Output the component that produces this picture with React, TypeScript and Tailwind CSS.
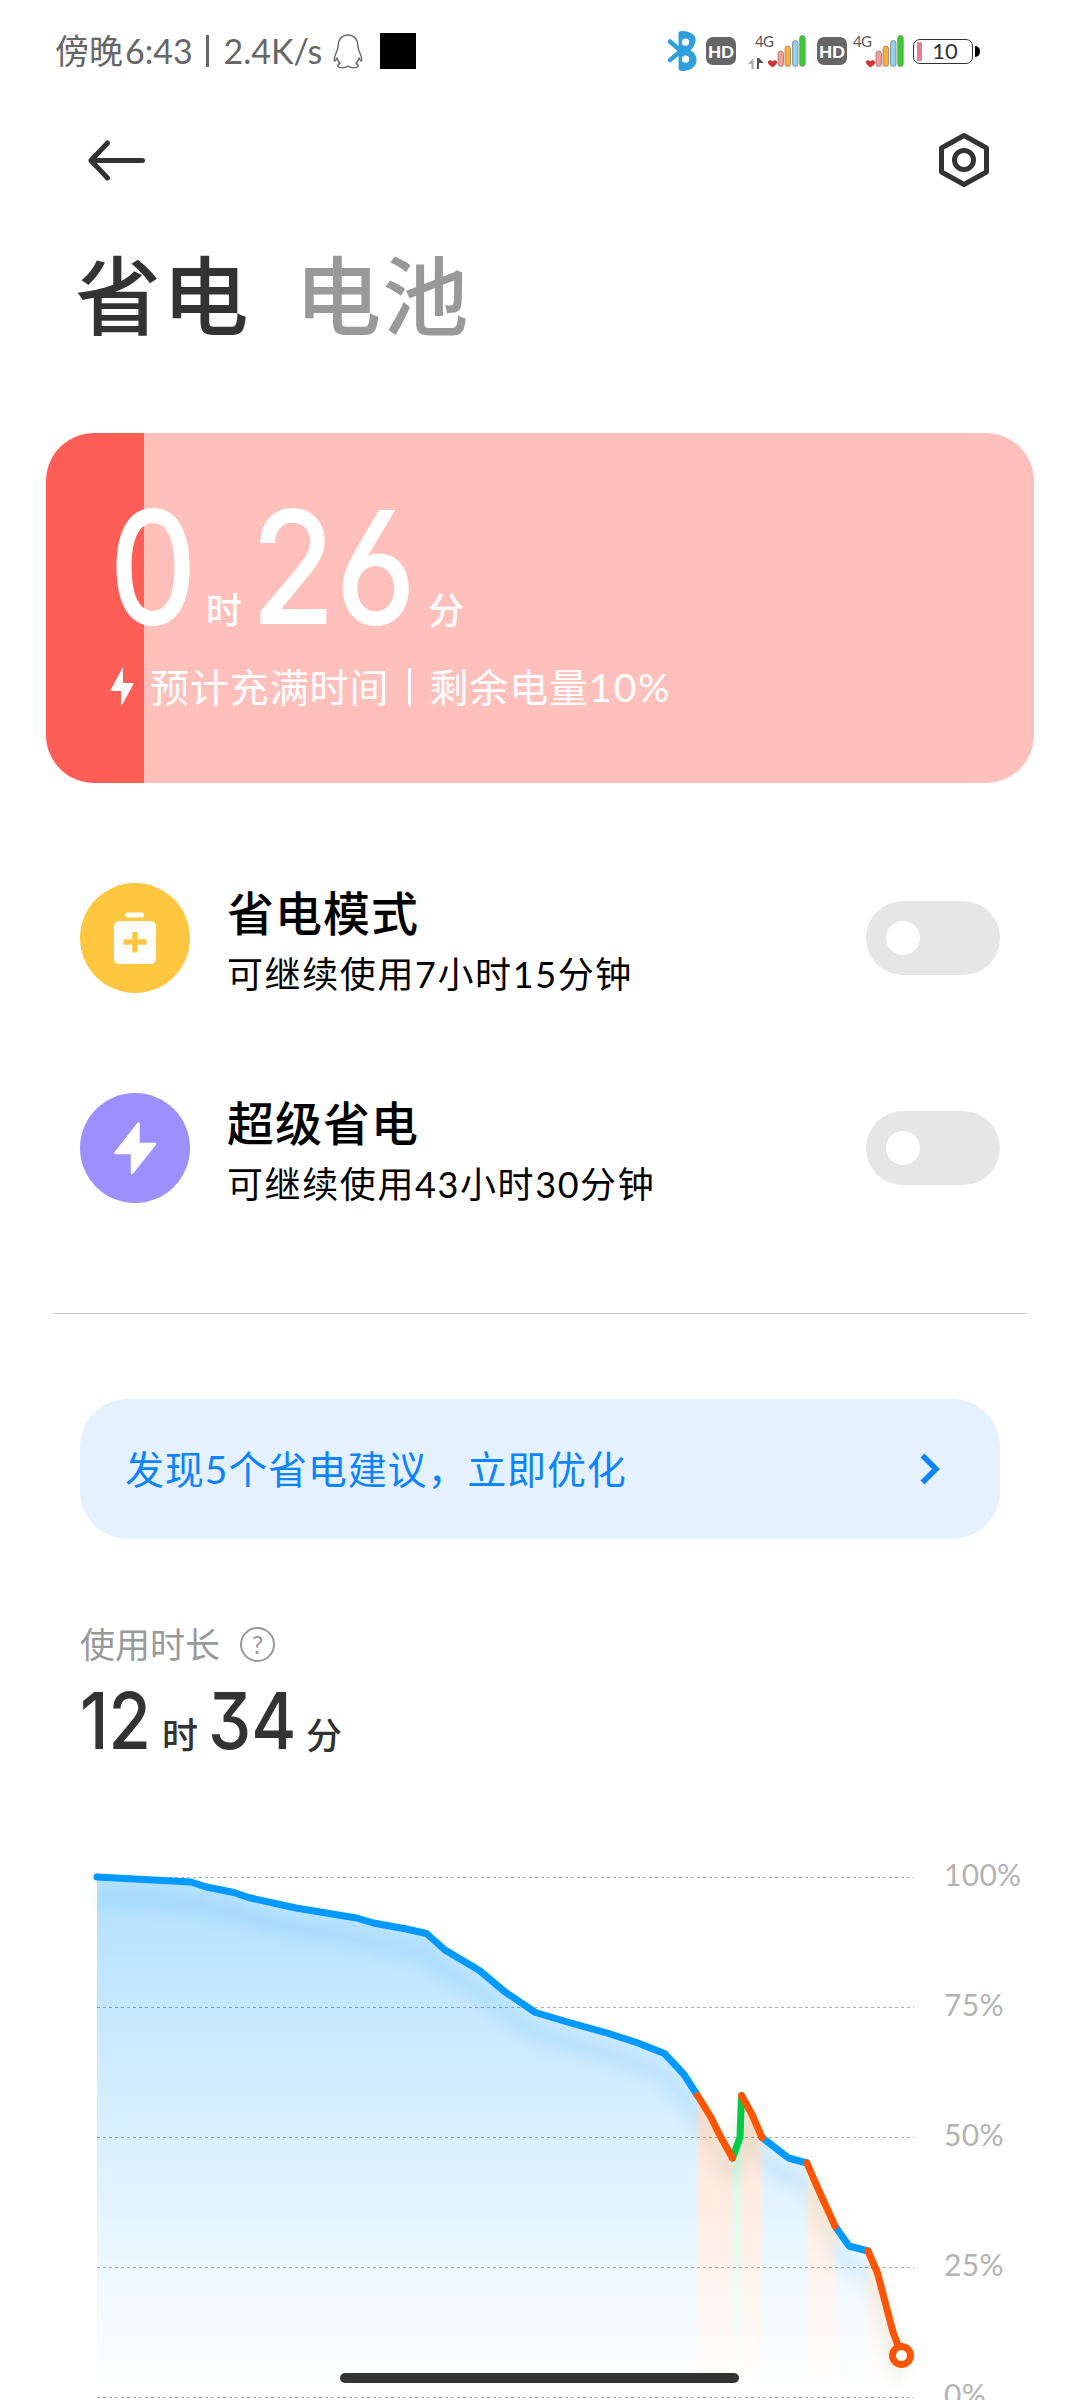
import clsx from 'clsx';
import { useState } from 'react';

const BLUE = '#0099ff';
const ORANGE = '#ff5500';
const GREEN = '#00cc44';

type Point = [number, number];

interface Segment {
  color: string;
  gradient: string;
  points: Point[];
}

// Battery level over time, in chart pixels. 100% sits at y = 30, 0% at y = 550
const segments: Segment[] = [
  {
    color: BLUE,
    gradient: 'fill-blue',
    points: [
      [97, 30], [191, 35], [206.5, 40], [234, 45.5], [248.5, 50.5], [296, 61], [356.5, 71], [373.5, 76],
      [406.5, 82], [426.5, 86.5], [445, 103], [479.5, 123.5], [504.5, 144.5], [535.5, 165.5], [567.5, 175],
      [607, 186], [636.5, 195.5], [664.5, 206.5], [684, 227.5], [697.5, 248.5],
    ],
  },
  { color: BLUE, gradient: 'fill-blue', points: [[762, 290.5], [788.5, 311], [807, 316]] },
  { color: BLUE, gradient: 'fill-blue', points: [[835, 379], [849, 399], [868, 404]] },
  { color: GREEN, gradient: 'fill-green', points: [[732.5, 311], [740, 290.5], [741.5, 248.5]] },
  { color: ORANGE, gradient: 'fill-orange', points: [[697.5, 248.5], [710.5, 269.5], [721, 290.5], [732.5, 311]] },
  { color: ORANGE, gradient: 'fill-orange', points: [[741.5, 248.5], [752, 267.5], [762, 290.5]] },
  { color: ORANGE, gradient: 'fill-orange', points: [[807, 316], [815.5, 336], [835, 379]] },
  { color: ORANGE, gradient: 'fill-orange', points: [[868, 404], [877.5, 426], [893, 485], [901.5, 508]] },
];

const toPoints = (points: Point[]) => points.map((p) => p.join(',')).join(' ');

const toArea = (points: Point[]) =>
  toPoints([[points[0][0], 550], ...points, [points[points.length - 1][0], 550]]);

const BluetoothIcon = () => (
  <svg viewBox="0 0 32 42" className="h-[42px] w-8 shrink-0">
    <path
      fillRule="evenodd"
      fill="#2f9fdd"
      d="M12.5 3.5C12.5 1 15 .6 19 1.2C26 2 30.5 6 29.5 11C29 15 27 18 24.5 20.5C28.5 22.5 31 26 30.5 31C30 37.5 23 41.5 16 41C13.5 40.8 12.5 39.5 12.5 37.5ZM19.5 8.5a3.6 3.6 0 1 0 .1 7.2a3.6 3.6 0 0 0 0-7.2ZM19.5 25.5a3.6 3.6 0 1 0 .1 7.2a3.6 3.6 0 0 0 0-7.2Z"
    />
    <path d="M4 11.5L15 21L4 30" fill="none" stroke="#2f9fdd" strokeWidth="4.5" strokeLinecap="round" />
  </svg>
);

const HdBadge = () => (
  <span className="flex h-7 w-[30px] shrink-0 items-center justify-center rounded-[7px] bg-[#666] font-[Lato,sans-serif] text-[17px] leading-none font-black text-white">
    HD
  </span>
);

const bars = [
  { x: 32, y: 18, color: '#f79a9c' },
  { x: 39, y: 13, color: '#fbb034' },
  { x: 46.5, y: 7.5, color: '#8fd0f3' },
  { x: 53.7, y: 2.5, color: '#35d02f' },
];

const SignalIcon = ({ withData = false }: { withData?: boolean }) => (
  <svg
    viewBox={withData ? '0 0 62 36' : '8 0 54 36'}
    className={clsx('h-9 shrink-0', withData ? 'w-[62px]' : 'w-[54px]')}
  >
    <text x="9" y="14" fontSize="15" fill="#555" fontFamily="Lato, sans-serif" textLength="19">
      4G
    </text>
    {withData && (
      <>
        <path d="M2 31L7.5 25V36H5.5V31Z" fill="#aaa" />
        <path d="M11 25H13V30L17.5 30L13 25V36H11Z" fill="#555" />
      </>
    )}
    <path d="M26.5 34.5C23 32 21.8 30.5 22 29C22.3 26.8 25.2 26.5 26.5 28.5C27.8 26.5 30.7 26.8 31 29C31.2 30.5 30 32 26.5 34.5Z" fill="#cf3338" />
    {bars.map((bar) => (
      <rect
        key={bar.x}
        x={bar.x}
        y={bar.y}
        width="5.5"
        height={33.5 - bar.y}
        rx="2.7"
        fill={bar.color}
        stroke="#7d7468"
        strokeOpacity="0.7"
        strokeWidth="1"
      />
    ))}
  </svg>
);

const BatteryBadge = () => (
  <div className="ml-[7px] flex items-center">
    <div className="flex h-[25px] w-[60px] items-center rounded-[7px] border-[1.5px] border-[#333] pl-[3px]">
      <span className="h-[19px] w-[5px] rounded-[1px] bg-[#e87f90]" />
      <span className="flex-1 pr-1 text-center font-[Lato,sans-serif] text-[22px] leading-none text-[#333]">10</span>
    </div>
    <span className="ml-[2px] h-[11px] w-[5px] rounded-r-full bg-black" />
  </div>
);

const PenguinIcon = () => (
  <svg viewBox="0 0 30 36" className="ml-[9px] h-9 w-[30px]" fill="none" stroke="#666" strokeWidth="1.4" strokeLinejoin="round">
    <path d="M15 2C8.5 2 5 7 5 13C5 15.5 4.5 17 3.5 19C2 22 .8 25 1.5 28C2.3 28 3.3 26.5 4 25C4.5 27.5 5.5 29 7 30.5C4.5 31.5 4 33.5 6 34.2C9 35.2 13 34.5 15 33.2C17 34.5 21 35.2 24 34.2C26 33.5 25.5 31.5 23 30.5C24.5 29 25.5 27.5 26 25C26.7 26.5 27.7 28 28.5 28C29.2 25 28 22 26.5 19C25.5 17 25 15.5 25 13C25 7 21.5 2 15 2Z" />
  </svg>
);

const StatusBar = () => (
  <div className="flex h-[102px] items-center pl-[55px] text-[#666]">
    <div className="flex w-[611px] items-center">
      <span className="text-[34px] leading-none">傍晚</span>
      <span className="ml-[2px] w-[66px] text-[34px] leading-none">6:43</span>
      <span className="mx-[15px] h-8 w-[2.5px] bg-[#666]" />
      <span className="w-[100px] text-[34px] leading-none">2.4K/s</span>
      <PenguinIcon />
      <span className="ml-[17px] size-9 bg-black" />
    </div>
    <BluetoothIcon />
    <div className="ml-2 flex items-center">
      <HdBadge />
      <div className="ml-[10px]">
        <SignalIcon withData />
      </div>
      <div className="ml-[9px]">
        <HdBadge />
      </div>
      <div className="ml-[5px]">
        <SignalIcon />
      </div>
      <BatteryBadge />
    </div>
  </div>
);

const NavBar = () => (
  <div className="flex h-[116px] items-center justify-between pr-[90px] pl-[85px]">
    <button type="button" aria-label="返回">
      <svg viewBox="0 0 60 42" className="h-[42px] w-[60px]" fill="none" stroke="#333" strokeWidth="5" strokeLinecap="round" strokeLinejoin="round">
        <path d="M57.5 21.5H6M22.5 4L6 21.5L22.5 39" />
      </svg>
    </button>
    <button type="button" aria-label="设置">
      <svg viewBox="0 0 52 56" className="h-14 w-[52px]" fill="none" stroke="#333" strokeWidth="5" strokeLinejoin="round">
        <path d="M26 3.5L48.5 16V40L26 52.5L3.5 40V16Z" />
        <circle cx="26" cy="28" r="9.5" />
      </svg>
    </button>
  </div>
);

interface DurationProps {
  hours: string;
  minutes: string;
  large?: boolean;
}

const Duration = ({ hours, minutes, large = false }: DurationProps) => {
  const digit = clsx(
    "block origin-left scale-x-[0.87] leading-none font-medium font-[Inter,sans-serif] [font-feature-settings:'cv03','cv09']",
    large ? 'text-[157px]' : 'text-[79px]',
  );

  return (
    <div className="flex items-baseline">
      <div className={large ? 'w-[97px]' : 'w-[82px]'}>
        <span className={digit}>{hours}</span>
      </div>
      <span className="text-[36px] leading-none font-medium">时</span>
      <div className={large ? 'ml-[9px] w-[177px]' : 'ml-[10px] w-[98px]'}>
        <span className={digit}>{minutes}</span>
      </div>
      <span className="text-[36px] leading-none font-medium">分</span>
    </div>
  );
};

const ChargeCard = () => (
  <section className="mx-[46px] flex h-[350px] flex-col rounded-[48px] bg-[linear-gradient(to_right,#ff5e57_98px,#ffc0bc_98px)] pl-[63px] text-white">
    <div className="mt-[56px] h-[155px]">
      <Duration hours="0" minutes="26" large />
    </div>
    <div className="mt-[21px] flex h-[44px] items-center pl-px">
      <svg viewBox="0 0 24 40" className="h-10 w-6">
        <path d="M13 0V16H24L11 40V24H0Z" fill="#fff" />
      </svg>
      <span className="ml-[16px] text-[39px] leading-none tracking-[0.9px]">预计充满时间</span>
      <span className="mr-[18px] ml-[19px] h-[38px] w-[3px] rounded-full bg-white" />
      <span className="text-[39px] leading-none tracking-[0.9px]">
        剩余电量<span className="tracking-[2px]">10%</span>
      </span>
    </div>
  </section>
);

const SaverIcon = () => (
  <svg viewBox="0 0 110 110" className="size-[110px]">
    <circle cx="55" cy="55" r="55" fill="#ffc640" />
    <rect x="45.5" y="29.5" width="18.5" height="5" rx="2" fill="#fff" />
    <rect x="34" y="38" width="42" height="43" rx="5.5" fill="#fff" />
    <path d="M43.5 59H66.5M55 49V69.5" stroke="#ffc640" strokeWidth="5.4" />
  </svg>
);

const UltraIcon = () => (
  <svg viewBox="0 0 110 110" className="size-[110px]">
    <circle cx="55" cy="55" r="55" fill="#9c90ff" />
    <path d="M58.5 30.5V51H75L52 80V60H35.5Z" fill="#fff" stroke="#fff" strokeWidth="2.5" strokeLinejoin="round" />
  </svg>
);

interface ModeRowProps {
  icon: React.ReactNode;
  title: string;
  description: string;
}

const ModeRow = ({ icon, title, description }: ModeRowProps) => {
  const [enabled, setEnabled] = useState(false);

  return (
    <div className="flex h-[210px] items-center px-20">
      {icon}
      <div className="ml-[37px] flex flex-1 flex-col pt-[9px] text-black">
        <span className="text-[47px] leading-[60px] font-medium tracking-[1px]">{title}</span>
        <span className="mt-[3px] text-[36px] leading-[56px] tracking-[1.6px]">{description}</span>
      </div>
      <button
        type="button"
        role="switch"
        aria-checked={enabled}
        aria-label={title}
        onClick={() => setEnabled(!enabled)}
        className={clsx(
          'flex h-[74px] w-[134px] items-center rounded-full px-5',
          enabled ? 'justify-end bg-[#0d84ff]' : 'justify-start bg-[#e6e6e6]',
        )}
      >
        <span className="size-[34px] rounded-full bg-white" />
      </button>
    </div>
  );
};

const TipBanner = () => (
  <button
    type="button"
    className="mx-20 mt-[85px] flex h-[140px] items-center justify-between rounded-[48px] bg-[#e5f1ff] pr-[60px] pl-[45px] text-[#0d84ff]"
  >
    <span className="text-[39px] leading-none tracking-[0.85px]">发现5个省电建议，立即优化</span>
    <svg viewBox="0 0 20 32" className="h-8 w-5" fill="none" stroke="currentColor" strokeWidth="5.5">
      <path d="M2.5 2.5L16 16L2.5 29.5" />
    </svg>
  </button>
);

const BatteryChart = () => (
  <div className="flex h-[553px] overflow-hidden">
    <svg viewBox="0 0 930 553" className="h-[553px] w-[930px] shrink-0">
      <defs>
        {[
          ['fill-blue', BLUE],
          ['fill-orange', ORANGE],
          ['fill-green', GREEN],
        ].map(([id, color]) => (
          <linearGradient key={id} id={id} gradientUnits="userSpaceOnUse" x1="0" y1="30" x2="0" y2="545">
            <stop offset="0" stopColor={color} stopOpacity="0.3" />
            <stop offset="1" stopColor={color} stopOpacity="0" />
          </linearGradient>
        ))}
        <filter id="line-shadow" x="-10%" y="-10%" width="120%" height="130%">
          <feGaussianBlur stdDeviation="8" />
        </filter>
      </defs>

      {segments.map((segment) => (
        <polygon key={toPoints(segment.points)} points={toArea(segment.points)} fill={`url(#${segment.gradient})`} />
      ))}

      {/* soft shadow dropped below the curve */}
      <g filter="url(#line-shadow)" transform="translate(0 21)" opacity="0.11">
        {segments.map((segment) => (
          <polyline
            key={toPoints(segment.points)}
            points={toPoints(segment.points)}
            fill="none"
            stroke={segment.color === BLUE ? '#0088dd' : '#4f9a50'}
            strokeWidth="14"
          />
        ))}
      </g>

      {[30.5, 160.5, 290.5, 420.5, 550.5].map((y) => (
        <line key={y} x1="97" x2="914" y1={y} y2={y} stroke="#000" strokeOpacity="0.32" strokeDasharray="3 3" />
      ))}

      {segments.map((segment) => (
        <polyline
          key={toPoints(segment.points)}
          points={toPoints(segment.points)}
          fill="none"
          stroke={segment.color}
          strokeWidth="7"
          strokeLinecap="round"
          strokeLinejoin="round"
        />
      ))}
      <circle cx="901.5" cy="508.5" r="9" fill="#fff" stroke={ORANGE} strokeWidth="7" />
    </svg>

    <div className="ml-[14px] flex flex-col pt-[12px] text-[30px] leading-[30px] tracking-[0.3px] text-[#b3b3b3]">
      {['100%', '75%', '50%', '25%', '0%'].map((label) => (
        <span key={label} className="h-[130px] shrink-0">
          {label}
        </span>
      ))}
    </div>
  </div>
);

export default function App() {
  return (
    <main className="relative flex h-[2400px] w-[1080px] flex-col overflow-hidden bg-white font-[Lato,'Noto_Sans_CJK_SC',sans-serif]">
      <StatusBar />
      <NavBar />

      <div className="mb-[59px] flex h-[156px] items-center gap-[45px] pl-[75px] text-[86px] leading-none tracking-[1.5px]">
        <h1 className="font-medium text-[#333]">省电</h1>
        <span className="font-medium text-[#999]">电池</span>
      </div>

      <ChargeCard />

      <div className="mt-[50px]">
        <ModeRow icon={<SaverIcon />} title="省电模式" description="可继续使用7小时15分钟" />
        <ModeRow icon={<UltraIcon />} title="超级省电" description="可继续使用43小时30分钟" />
      </div>

      <hr className="mx-[54px] mt-[60px] h-px border-0 bg-[#c8c8c8]" />

      <TipBanner />

      <section className="mt-20 flex h-[228px] flex-col pl-20 text-[#333]">
        <div className="flex h-[50px] items-center text-[#999]">
          <span className="text-[35px] leading-none">使用时长</span>
          <span className="ml-[20px] flex size-[35px] items-center justify-center rounded-full border-[2.5px] border-[#999] text-[25px] leading-none">
            ?
          </span>
        </div>
        <div className="mt-[12px]">
          <Duration hours="12" minutes="34" />
        </div>
      </section>

      <BatteryChart />

      {/* gesture bar floating over the page */}
      <div className="absolute bottom-[17px] left-[340px] h-[10px] w-[399px] rounded-full bg-[#333]" />
    </main>
  );
}
